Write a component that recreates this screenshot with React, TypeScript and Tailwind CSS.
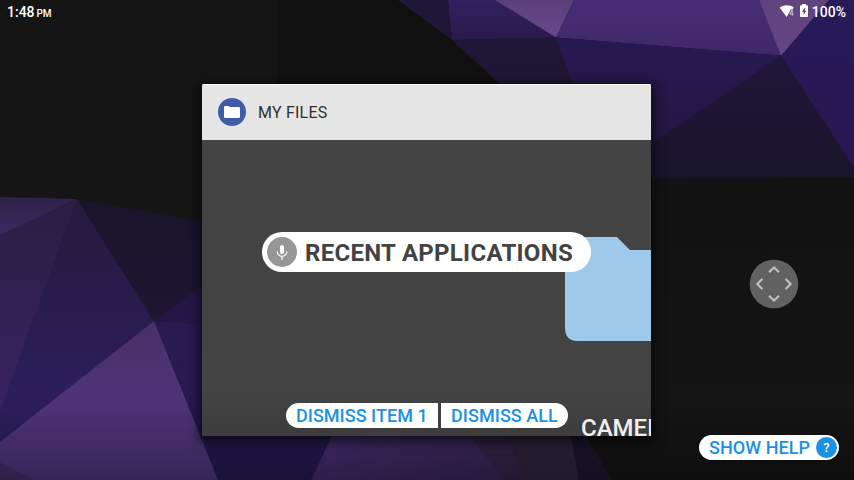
import React from "react";

type Facet = { points: string; from: string; to: string; dir?: "v" | "h" };

const facets: Facet[] = [
  { points: "0,0 277,0 277,480 0,480", from: "#151515", to: "#151515" },
  { points: "277,0 854,0 854,480 277,480", from: "#101010", to: "#151515" },
  // lower left cluster
  { points: "0,197 77,199 0,236", from: "#30224a", to: "#3d2860" },
  { points: "77,199 0,235 0,412", from: "#291e42", to: "#3b2263" },
  { points: "77,199 0,411 0,443 154,321", from: "#251a3d", to: "#2e1f62" },
  { points: "77,199 202,222 260,234 260,244 202,286 154,321", from: "#19142b", to: "#1e1633" },
  { points: "154,321 202,286 340,190 340,340 202,326", from: "#231647", to: "#241747" },
  { points: "154,321 202,325 340,338 340,480 218,480", from: "#291a50", to: "#271955" },
  { points: "154,321 218,480 0,480 0,442", from: "#483069", to: "#533884" },
  { points: "0,462 34,480 0,480", from: "#492f70", to: "#492f70" },
  // bottom strip
  { points: "353,392 332,436 311,480 505,480 470,436 440,392", from: "#4a2d73", to: "#3a275a", dir: "h" },
  { points: "440,392 470,436 505,480 524,480 509,436 490,392", from: "#332449", to: "#33264a" },
  { points: "490,392 509,436 524,480 579,480 571,436 563,392", from: "#2c233c", to: "#302740" },
  { points: "563,392 571,436 579,480 612,480 586,436 560,392", from: "#1b1528", to: "#211730" },
  // upper right cluster
  { points: "398,0 448,0 452,40", from: "#1e1739", to: "#211636" },
  { points: "448,0 495,0 556,37.5 452,40", from: "#33205f", to: "#2a1a4b" },
  { points: "495,0 574,0 556,37.5", from: "#5c407c", to: "#67478b" },
  { points: "574,0 759,0 781,55.5 556,37.5", from: "#472d78", to: "#3f2868" },
  { points: "759,0 829,0 781,56", from: "#60447d", to: "#644487" },
  { points: "829,0 854,0 854,168 781,56", from: "#281b5a", to: "#271650" },
  { points: "452,40 556,37.5 572,84 590,140 565,140 500,84", from: "#201738", to: "#1b152e" },
  { points: "556,37.5 781,55.5 651,145 590,180 572,84", from: "#281852", to: "#21163e" },
  { points: "781,55.5 854,168 854,178 600,179 651,145", from: "#201739", to: "#19142c" },
];

function Wallpaper() {
  return (
    <svg className="absolute inset-0 h-full w-full" viewBox="0 0 854 480">
      <defs>
        {facets.map((f, i) => (
          <linearGradient key={i} id={`facet${i}`} x1="0" y1="0" x2={f.dir === "h" ? "1" : "0"} y2={f.dir === "h" ? "0" : "1"}>
            <stop offset="0" stopColor={f.from} />
            <stop offset="1" stopColor={f.to} />
          </linearGradient>
        ))}
      </defs>
      {facets.map((f, i) => (
        <polygon key={i} points={f.points} fill={`url(#facet${i})`} />
      ))}
    </svg>
  );
}

function StatusBar() {
  return (
    <header className="flex h-6 items-start justify-between pl-[7px] pr-2 font-medium text-white">
      <div className="flex items-baseline gap-0.5 leading-[25px]">
        <span className="text-[14px]">1:48</span>
        <span className="text-[10px] tracking-[-0.2px]">PM</span>
      </div>
      <div className="flex items-start">
        <svg className="mt-[5px] h-3 w-[15px]" viewBox="0 0 15 12">
          <path d="M-.4 2.5C3.6-.6 9.8-.6 13.8 2.5L12.4 4.6H10.8L8.5 8.8 6.7 12Z" fill="#fff" />
          <path d="M12.2 10.8V5.2L9.7 9H13.6" fill="none" stroke="#d0c4df" strokeWidth="1" />
        </svg>
        <svg className="ml-[5px] mt-1 h-[13px] w-2" viewBox="0 0 8 13">
          <path d="M2.2 0H5.8V1.3H7.2Q8 1.3 8 2.1V12.2Q8 13 7.2 13H.8Q0 13 0 12.2V2.1Q0 1.3.8 1.3H2.2Z" fill="#fff" />
          <path d="M4.8 3.7 2 7.8H3.7V10.7L6.2 6.7H4.8Z" fill="#50356f" />
        </svg>
        <span className="ml-1 text-[14px] leading-[25px]">100%</span>
      </div>
    </header>
  );
}

function RecentCard() {
  return (
    <section className="flex h-[352px] w-[449px] flex-col overflow-hidden rounded-t-[2px] bg-gradient-to-b from-[#434343] from-88% to-[#3d3d3d] shadow-[0_3px_12px_3px_rgba(0,0,0,0.6)]">
      <div className="flex h-14 shrink-0 items-center bg-[#e5e5e5] pl-4 shadow-[inset_0_1px_0_#fff]">
        <div className="flex size-7 items-center justify-center rounded-full bg-[#405ca9]">
          <svg className="h-3 w-4" viewBox="0 0 16 12">
            <path d="M1.2 0H4.4Q5.2 0 5.8 1H14.8Q16 1 16 2.2V10.8Q16 12 14.8 12H1.2Q0 12 0 10.8V1.2Q0 0 1.2 0Z" fill="#fff" />
          </svg>
        </div>
        <span className="ml-3 pt-px text-[16px] tracking-[0.22px] text-[#303030]">MY FILES</span>
      </div>
      <div className="flex flex-1 flex-col items-start overflow-hidden pl-[363px] pt-[97px]">
        <svg className="h-[104px] w-[86px] shrink-0" viewBox="0 0 86 104">
          <path d="M0 0H52L65 13H86V104H13Q0 104 0 91Z" fill="#9fc9eb" />
        </svg>
        <span className="ml-4 mt-[73px] whitespace-nowrap text-[24px] font-medium leading-7 text-[#f0f0f0]">CAMERA</span>
      </div>
    </section>
  );
}

function VoiceTitle() {
  return (
    <div className="absolute left-[262px] top-[232px] flex h-10 w-[329px] items-center rounded-full bg-white pl-[5px]">
      <div className="flex size-[30px] items-center justify-center rounded-full bg-[#969696]">
        <svg className="h-[15px] w-3" viewBox="0 0 12 15">
          <rect x="4" y="0" width="4" height="9" rx="2" fill="#fff" />
          <path d="M1.2 6.5A4.8 4.8 0 0 0 10.8 6.5M6 11.4V15" fill="none" stroke="#fff" strokeWidth="1.2" />
        </svg>
      </div>
      <span className="ml-2 whitespace-nowrap pt-0.5 text-[24px] font-bold leading-10 tracking-[0.29px] text-[#434343]">RECENT APPLICATIONS</span>
    </div>
  );
}

function DismissActions() {
  return (
    <div className="absolute left-[286px] top-[403px] flex h-[25px] gap-[3px] whitespace-nowrap text-[18px] font-medium leading-[25px] text-[#1b91e5]">
      <button className="w-[152px] rounded-l-full bg-white pl-[10px] text-left tracking-[0.03px]">DISMISS ITEM 1</button>
      <button className="w-[127px] rounded-r-full bg-white pl-[10px] text-left tracking-[0.06px]">DISMISS ALL</button>
    </div>
  );
}

function HelpButton() {
  return (
    <button className="absolute left-[699px] top-[435px] flex h-[25px] w-[140px] items-center justify-between whitespace-nowrap rounded-full bg-white pl-[10px] pr-[2px] text-[18px] font-medium leading-[25px] tracking-[0.05px] text-[#1b91e5]">
      <span>SHOW HELP</span>
      <span className="flex size-[21px] items-center justify-center rounded-full bg-[#1b91e5] text-[13px] leading-none text-white">?</span>
    </button>
  );
}

function NavPad() {
  return (
    <svg className="absolute left-[749px] top-[259px] size-[50px]" viewBox="0 0 50 50">
      <circle cx="25" cy="25" r="24.3" fill="#616161" />
      <path d="M20 13.3 25 8.3 30 13.3M20 36.7 25 41.7 30 36.7M13.3 20 8.3 25 13.3 30M36.7 20 41.7 25 36.7 30" fill="none" stroke="#c4c4c4" strokeWidth="2" />
    </svg>
  );
}

export default function App() {
  return (
    <main className="relative h-[480px] w-[854px] overflow-hidden bg-[#121212] font-['Roboto','Noto_Sans',sans-serif]">
      <Wallpaper />
      <div className="absolute inset-x-0 bottom-0 h-20 bg-gradient-to-b from-transparent to-black/35" />
      <div className="relative flex flex-col">
        <StatusBar />
        <div className="pl-[202px] pt-[60px]">
          <RecentCard />
        </div>
      </div>
      <VoiceTitle />
      <DismissActions />
      <NavPad />
      <HelpButton />
    </main>
  );
}
